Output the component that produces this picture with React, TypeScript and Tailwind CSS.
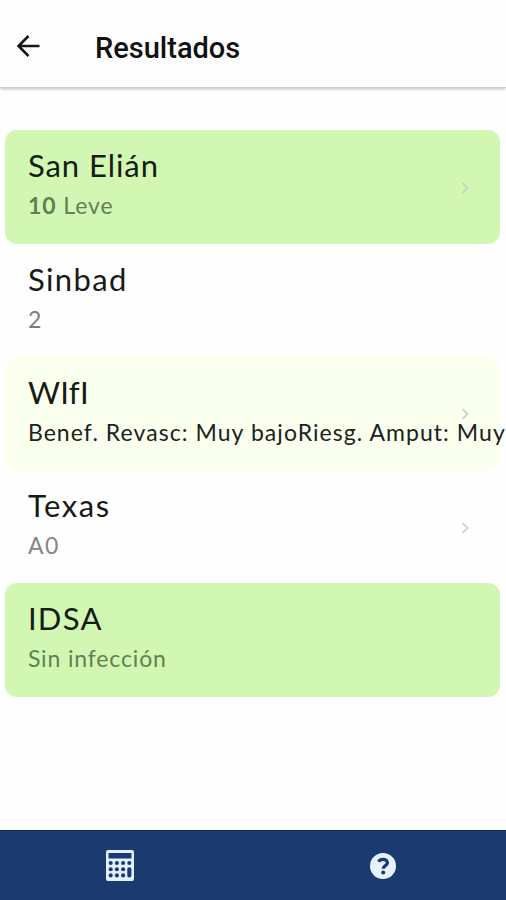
import clsx from "clsx";
import type { ReactNode } from "react";

interface Result {
  title: string;
  detail: ReactNode;
  rowClass?: string;
  titleClass: string;
  detailClass: string;
  hasLink?: boolean;
}

const RESULTS: Result[] = [
  {
    title: "San Elián",
    detail: (
      <>
        <strong className="font-bold">10</strong> Leve
      </>
    ),
    rowClass: "bg-[#d2f7b3]",
    titleClass: "tracking-[0.95px]",
    detailClass: "text-[#638051] tracking-[0.95px]",
    hasLink: true,
  },
  {
    title: "Sinbad",
    detail: "2",
    titleClass: "tracking-[1.4px]",
    detailClass: "text-[#7b7b7b]",
  },
  {
    title: "WIfI",
    detail: "Benef. Revasc: Muy bajoRiesg. Amput: Muy",
    rowClass: "bg-[#faffee]",
    titleClass: "tracking-[0.3px]",
    detailClass: "text-[#20221e] tracking-[1.06px]",
    hasLink: true,
  },
  {
    title: "Texas",
    detail: "A0",
    titleClass: "tracking-[1.6px]",
    detailClass: "text-[#858585] tracking-[1.5px]",
    hasLink: true,
  },
  {
    title: "IDSA",
    detail: "Sin infección",
    rowClass: "bg-[#d2f7b3]",
    titleClass: "tracking-[1.3px]",
    detailClass: "text-[#638051] tracking-[0.85px]",
  },
];

const BackIcon = () => (
  <svg viewBox="0 0 24 24" fill="none" className="h-6 w-6" aria-hidden="true">
    <path d="M23.5 12H2.5M12.5 2L2.5 12L12.5 22" stroke="#151515" strokeWidth="2.5" />
  </svg>
);

const ChevronIcon = () => (
  <svg viewBox="0 0 8 12" fill="none" className="h-3 w-2" aria-hidden="true">
    <path d="M1.5 1L6.5 6L1.5 11" stroke="#c5cec5" strokeWidth="1.6" />
  </svg>
);

const CalculatorIcon = () => (
  <svg viewBox="0 0 28 31" className="h-[31px] w-7" aria-hidden="true">
    <rect width="28" height="31" rx="2" fill="#e3f0ff" />
    <g fill="#1b3b70">
      <rect x="2.5" y="3" width="23" height="5.5" rx="0.5" />
      {[13, 19.2, 25.4].map((y) =>
        [4.7, 10.9, 17.1].map((x) => <circle key={`${x}-${y}`} cx={x} cy={y} r="2.05" />),
      )}
      <circle cx="23.3" cy="13" r="2.05" />
      <rect x="21.3" y="17.2" width="4.1" height="10.3" rx="2" />
    </g>
  </svg>
);

const HelpIcon = () => (
  <svg viewBox="0 0 26 26" fill="none" className="h-[26px] w-[26px]" aria-hidden="true">
    <circle cx="13" cy="13" r="13" fill="#e6f2ff" />
    <path
      d="M8.5 8.8C9.4 7 10.8 6.3 13 6.3C15.6 6.3 17.4 7.7 17.4 9.8C17.4 12.7 13.2 12.6 13.2 15.8"
      stroke="#1b3b70"
      strokeWidth="3.3"
    />
    <circle cx="13.2" cy="19.6" r="2" fill="#1b3b70" />
  </svg>
);

function ResultRow({ title, detail, rowClass, titleClass, detailClass, hasLink }: Result) {
  return (
    <li
      className={clsx(
        "relative h-[113.3px] rounded-xl pt-3.5 pl-[22.5px] font-['Lato','Noto_Sans',sans-serif] whitespace-nowrap",
        rowClass,
      )}
    >
      {hasLink && (
        <span className="absolute top-[51.6px] right-[31px]">
          <ChevronIcon />
        </span>
      )}
      <h2 className={clsx("relative text-[31px] leading-[42px] text-[#171b16]", titleClass)}>{title}</h2>
      <p className={clsx("relative text-[23px] leading-[38px]", detailClass)}>{detail}</p>
    </li>
  );
}

export default function App() {
  return (
    <div className="flex h-[900px] w-[506px] flex-col overflow-hidden bg-[#fefefe]">
      <header className="flex h-[88px] shrink-0 items-center border-b border-[#d0d0d0] pt-[7px] pl-4 shadow-[0_1px_3px_rgba(0,0,0,0.25)]">
        <button className="-mt-0.5" aria-label="Volver">
          <BackIcon />
        </button>
        <h1 className="ml-[55px] pt-[3px] font-['Roboto',sans-serif] text-[29px] font-medium text-[#111]">Resultados</h1>
      </header>

      <main className="flex-1 pt-[42.3px] pr-[6.5px] pl-[5.4px]">
        <ul>
          {RESULTS.map((result) => (
            <ResultRow key={result.title} {...result} />
          ))}
        </ul>
      </main>

      <nav className="flex h-[70px] shrink-0 items-center border-t border-[#122f60] bg-[#1b3b70]">
        <button className="flex w-[240px] justify-center" aria-label="Calculadora">
          <CalculatorIcon />
        </button>
        <button className="flex flex-1 justify-center pl-[20px]" aria-label="Ayuda">
          <HelpIcon />
        </button>
      </nav>
    </div>
  );
}
